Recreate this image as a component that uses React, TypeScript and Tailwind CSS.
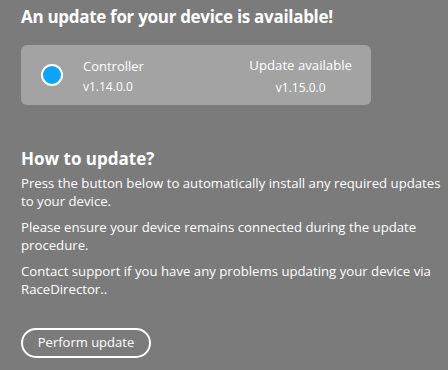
export default function App() {
  return (
    <div
      className="w-[448px] h-[370px] bg-[#7b7b7b] text-white overflow-hidden"
      style={{ fontFamily: '"Open Sans", "Noto Sans", sans-serif' }}
    >
      <div className="pl-[21px] pt-[5px] pr-[4px]">
        <h1 className="text-[17px] font-bold leading-[24px] tracking-[-0.3px]">
          An update for your device is available!
        </h1>
        <div className="mt-[16px] w-[350px] h-[60px] rounded-[6px] bg-[#a3a3a3] flex items-center">
          <div className="ml-[20px] w-[22px] h-[22px] rounded-full bg-white flex items-center justify-center">
            <div className="w-[18px] h-[18px] rounded-full bg-[#0aa4fa]" />
          </div>
          <div className="ml-[20px] mt-[2px] flex flex-col text-[13px] leading-[19px]">
            <span>Controller</span>
            <span className="text-[12px] mt-[1px]">v1.14.0.0</span>
          </div>
          <div className="ml-auto mr-[19px] mt-[2px] flex flex-col items-center text-[13.2px] leading-[19px]">
            <span>Update available</span>
            <span className="text-[12px] mt-[3px]">v1.15.0.0</span>
          </div>
        </div>
        <h2 className="mt-[42px] text-[17px] font-bold leading-[24px]">How to update?</h2>
        <div className="text-[13.2px] leading-[17.5px] mt-[4px]">
          <p>Press the button below to automatically install any required updates to your device.</p>
          <p className="mt-[9px]">Please ensure your device remains connected during the update procedure.</p>
          <p className="mt-[9px]">Contact support if you have any problems updating your device via RaceDirector..</p>
        </div>
        <button className="mt-[30px] w-[130px] h-[30px] rounded-full border-2 border-white text-[13px]">
          Perform update
        </button>
      </div>
    </div>
  );
}
